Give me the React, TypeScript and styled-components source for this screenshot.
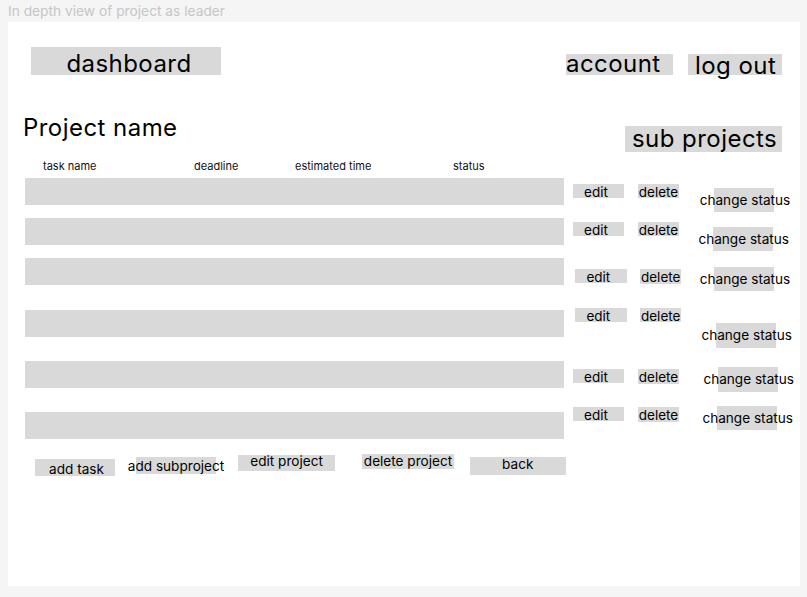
import React from "react";
import styled, { createGlobalStyle, css } from "styled-components";

const GRAY = "#d9d9d9";
// line-height that puts the Inter baseline `base` px below the top of the line box
const lineFor = (size: number, base: number) => `${(2 * base - 0.7275 * size).toFixed(2)}px`;

const GlobalStyle = createGlobalStyle`
  html, body { margin: 0; padding: 0; background: #f5f5f5; }
  body { font-family: Inter, "Noto Sans", "Liberation Sans", sans-serif; color: #000; }
  *, *::before, *::after { box-sizing: border-box; }
`;

const Page = styled.div`
  width: 807px;
  height: 597px;
  padding: 0 7px 0 8px;
  display: flex;
  flex-direction: column;
  overflow: hidden;
`;

const Caption = styled.div`
  height: 22px;
  font-size: 13.75px;
  line-height: ${lineFor(13.75, 16.7)};
  color: #c6c6c6;
  white-space: nowrap;
`;

const Frame = styled.main`
  width: 792px;
  height: 564px;
  background: #ffffff;
  display: flex;
  flex-direction: column;
`;

const grayLabel = css`
  background: ${GRAY};
  white-space: nowrap;
  display: flex;
  flex-shrink: 0;
`;

const bigText = css`
  font-size: 24px;
  letter-spacing: 0.45px;
`;

const TopBar = styled.header`
  display: flex;
  align-items: flex-start;
  height: 28px;
  margin-top: 25px;
  padding: 0 18px 0 23px;
`;

const DashboardButton = styled.div`
  ${grayLabel};
  ${bigText};
  justify-content: center;
  width: 190px;
  height: 28px;
  padding-left: 6px;
  line-height: ${lineFor(24, 25.7)};
`;

const AccountLink = styled.div`
  ${grayLabel};
  ${bigText};
  margin-left: auto;
  margin-top: 7px;
  width: 107px;
  height: 21px;
  line-height: ${lineFor(24, 18.7)};
`;

const LogoutButton = styled.div`
  ${grayLabel};
  ${bigText};
  margin-left: 15px;
  margin-top: 7px;
  width: 94px;
  height: 21px;
  padding-left: 7px;
  line-height: ${lineFor(24, 20.3)};
`;

const ProjectHead = styled.section`
  display: flex;
  justify-content: space-between;
  align-items: flex-start;
  height: 39px;
  margin-top: 38px;
  padding: 0 18px 0 15px;
`;

const ProjectTitle = styled.h1`
  ${bigText};
  margin: 0;
  height: 29px;
  font-weight: 400;
  line-height: ${lineFor(24, 23.7)};
  white-space: nowrap;
`;

const SubProjectsButton = styled.div`
  ${grayLabel};
  ${bigText};
  margin-top: 13px;
  width: 157px;
  height: 26px;
  padding-left: 7px;
  line-height: ${lineFor(24, 21.3)};
`;

const ColumnHeads = styled.div`
  display: grid;
  grid-template-columns: 151px 101px 158px auto;
  height: 13px;
  margin-top: 8px;
  padding-left: 35px;
  font-size: 11px;
  line-height: ${lineFor(11, 10)};
  color: #111;
  white-space: nowrap;
`;

const TaskList = styled.div`
  display: flex;
  flex-direction: column;
`;

const TaskRow = styled.div<{ $gap: number }>`
  display: flex;
  align-items: flex-start;
  height: 27px;
  margin-top: ${(p) => p.$gap}px;
  padding-left: 17px;
`;

const TaskBar = styled.div`
  width: 539px;
  height: 27px;
  background: ${GRAY};
  flex-shrink: 0;
`;

const EditButton = styled.div<{ $dx: number; $dy: number }>`
  ${grayLabel};
  justify-content: center;
  margin-left: ${(p) => p.$dx}px;
  margin-top: ${(p) => p.$dy}px;
  width: 51.6px;
  height: 14px;
  padding-right: 5px;
  font-size: 13.5px;
  line-height: ${lineFor(13.5, 13.7)};
`;

const DeleteButton = styled.div<{ $dx: number; $dy: number }>`
  ${grayLabel};
  justify-content: center;
  margin-left: ${(p) => p.$dx}px;
  margin-top: ${(p) => p.$dy}px;
  width: 41.6px;
  height: 14.5px;
  font-size: 13.5px;
  line-height: ${lineFor(13.5, 13)};
`;

const StatusButton = styled.div<{ $dx: number; $dy: number }>`
  ${grayLabel};
  justify-content: center;
  margin-left: ${(p) => p.$dx}px;
  margin-top: ${(p) => p.$dy}px;
  width: 60px;
  height: 24.3px;
  padding-left: 2px;
  font-size: 13.6px;
  line-height: ${lineFor(13.6, 17)};
`;

const ActionBar = styled.footer`
  display: flex;
  align-items: flex-start;
  margin-top: 15px;
  padding-left: 27px;
`;

const ActionButton = styled.div<{
  $dx: number;
  $dy: number;
  $w: number;
  $h: number;
  $base: number;
  $pl: number;
}>`
  ${grayLabel};
  justify-content: center;
  margin-left: ${(p) => p.$dx}px;
  margin-top: ${(p) => p.$dy}px;
  width: ${(p) => p.$w}px;
  height: ${(p) => p.$h}px;
  padding-left: ${(p) => p.$pl}px;
  font-size: 13.6px;
  line-height: ${(p) => lineFor(13.6, p.$base)};
`;

const tasks = [
  { gap: 5.3, ex: 8.7, ey: 6, dx: 13.4, dy: 5.7, sx: 34.7, sy: 9.4 },
  { gap: 13, ex: 8.7, ey: 4, dx: 13.4, dy: 3.7, sx: 33.4, sy: 8.4 },
  { gap: 13, ex: 11, ey: 11, dx: 13.3, dy: 11, sx: 32.5, sy: 8.4 },
  { gap: 24.7, ex: 11, ey: -2.3, dx: 13.3, dy: -2.3, sx: 34.2, sy: 13.3 },
  { gap: 24, ex: 8.7, ey: 8.3, dx: 13.4, dy: 8.3, sx: 38.4, sy: 6.3 },
  { gap: 24, ex: 8.7, ey: -4.7, dx: 13.4, dy: -4.7, sx: 37.4, sy: -6 },
];

const actions = [
  { label: "add task", dx: 0, dy: 5, w: 80, h: 16.7, base: 15.3, pl: 3 },
  { label: "add subproject", dx: 21, dy: 2.7, w: 80, h: 17.6, base: 14.3, pl: 0 },
  { label: "edit project", dx: 22.3, dy: 1, w: 96.6, h: 15.7, base: 11.7, pl: 0 },
  { label: "delete project", dx: 27.1, dy: 0, w: 92, h: 15.3, base: 12, pl: 0 },
  { label: "back", dx: 16, dy: 3.3, w: 95.6, h: 18, base: 12, pl: 0 },
];

export default function App() {
  return (
    <>
      <GlobalStyle />
      <Page>
        <Caption>In depth view of project as leader</Caption>
        <Frame>
          <TopBar>
            <DashboardButton>dashboard</DashboardButton>
            <AccountLink>account</AccountLink>
            <LogoutButton>log out</LogoutButton>
          </TopBar>
          <ProjectHead>
            <ProjectTitle>Project name</ProjectTitle>
            <SubProjectsButton>sub projects</SubProjectsButton>
          </ProjectHead>
          <ColumnHeads>
            <span>task name</span>
            <span>deadline</span>
            <span>estimated time</span>
            <span>status</span>
          </ColumnHeads>
          <TaskList>
            {tasks.map((t, i) => (
              <TaskRow key={i} $gap={t.gap}>
                <TaskBar />
                <EditButton $dx={t.ex} $dy={t.ey}>edit</EditButton>
                <DeleteButton $dx={t.dx} $dy={t.dy}>delete</DeleteButton>
                <StatusButton $dx={t.sx} $dy={t.sy}>change status</StatusButton>
              </TaskRow>
            ))}
          </TaskList>
          <ActionBar>
            {actions.map((a) => (
              <ActionButton
                key={a.label}
                $dx={a.dx}
                $dy={a.dy}
                $w={a.w}
                $h={a.h}
                $base={a.base}
                $pl={a.pl}
              >
                {a.label}
              </ActionButton>
            ))}
          </ActionBar>
        </Frame>
      </Page>
    </>
  );
}
